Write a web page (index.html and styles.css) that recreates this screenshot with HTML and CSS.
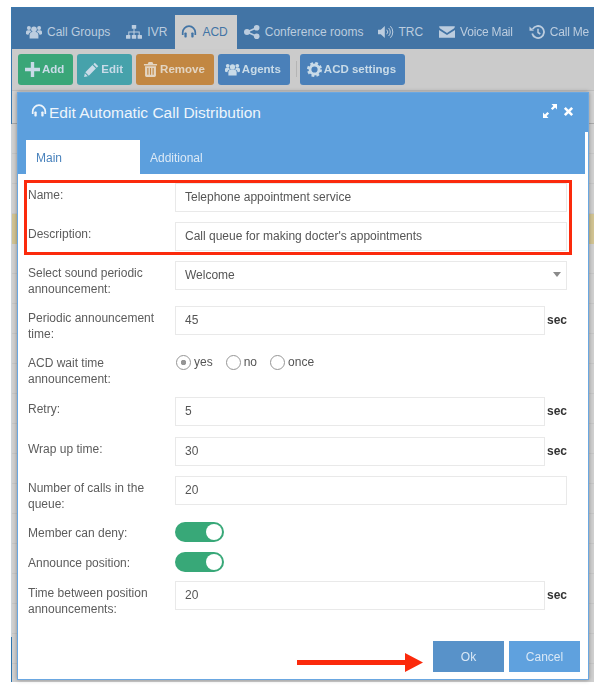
FILE: index.html
```html
<!DOCTYPE html>
<html lang="en">
<head>
<meta charset="utf-8">
<title>Edit Automatic Call Distribution</title>
<link rel="stylesheet" href="styles.css">
</head>
<body>
<svg class="defs" width="0" height="0" aria-hidden="true">
  <symbol id="i-users" viewBox="0 0 16 14"><circle cx="8" cy="4.2" r="2.8"/><circle cx="2.9" cy="3" r="2"/><circle cx="13.1" cy="3" r="2"/><path d="M3.6 13.5V10c0-2 1.4-3 2.6-3h3.6c1.2 0 2.6 1 2.6 3v3.5z"/><path d="M0 9V7c0-1 .8-1.800 1.800-1.800h2.400c.4.800.8 1.300 1.300 1.700C3.800 7.300 2.700 8 2.500 9.800 1.500 9.800.5 9.500 0 9zM16 9V7c0-1-.8-1.800-1.800-1.800h-2.400c-.4.800-.8 1.300-1.300 1.700 1.700.4 2.800 1.100 3 2.900 1 0 2-.3 2.500-.8z"/></symbol>
  <symbol id="i-sitemap" viewBox="0 0 16 14"><rect x="5.800" y="0" width="4.400" height="3.800" rx=".6"/><rect x="0" y="10" width="4.400" height="3.800" rx=".6"/><rect x="5.800" y="10" width="4.400" height="3.800" rx=".6"/><rect x="11.600" y="10" width="4.400" height="3.800" rx=".6"/><path d="M7.500 3.500h1v3h5.200v4h-1V7.500H8.500v3h-1v-3H3.300v3h-1v-4h5.200z"/></symbol>
  <symbol id="i-headphones" viewBox="0 0 16 14"><path d="M1.700 10V7.500a6.300 6.300 0 0 1 12.600 0V10" fill="none" stroke="currentColor" stroke-width="1.700"/><rect x="3.400" y="7.500" width="2.300" height="5" rx=".8"/><rect x="10.300" y="7.500" width="2.300" height="5" rx=".8"/></symbol>
  <symbol id="i-share" viewBox="0 0 16 14"><circle cx="3" cy="7" r="3"/><circle cx="12.700" cy="2.800" r="2.800"/><circle cx="12.700" cy="11.200" r="2.800"/><path d="M3 7l9.700-4.200M3 7l9.700 4.200" fill="none" stroke="currentColor" stroke-width="1.500"/></symbol>
  <symbol id="i-volume" viewBox="0 0 16 14"><path d="M0 4.700h2.800L6.800 1v12L2.800 9.300H0z"/><path d="M8.700 4.800a3 3 0 0 1 0 4.400M10.600 3a5.600 5.600 0 0 1 0 8M12.400 1.200a8.200 8.200 0 0 1 0 11.600" fill="none" stroke="currentColor" stroke-width="1"/></symbol>
  <symbol id="i-envelope" viewBox="0 0 16 14"><path d="M.2 1.200h15.600c.1 1.200-.4 2-1.300 2.600L8 8 1.500 3.800C.6 3.200.1 2.400.2 1.200z"/><path d="M0 5l8 5 8-5v7.800H0z"/></symbol>
  <symbol id="i-history" viewBox="0 0 16 14"><path d="M2.700 4.200a6 6 0 1 1-.5 4.300" transform="translate(1 0)" fill="none" stroke="currentColor" stroke-width="1.800"/><path d="M.5 1.500l4.500 4.200H.5z"/><path d="M9 3.800v3.700l2.300 1.500" fill="none" stroke="currentColor" stroke-width="1.500"/></symbol>
  <symbol id="i-plus" viewBox="0 0 16 16"><path d="M6.200 0h3.600v6.200H16v3.600H9.800V16H6.200V9.800H0V6.200h6.200z"/></symbol>
  <symbol id="i-pencil" viewBox="0 0 16 16"><path d="M11.500.8l3.700 3.700-1.600 1.600-3.700-3.700zM9 3.300L12.700 7l-7.600 7.600-3.700-3.700z"/><path d="M.9 11.900l3.200 3.200-4 .9z"/></symbol>
  <symbol id="i-trash" viewBox="0 0 14 16"><path d="M5 0h4l1 2h4v1.600H0V2h4z"/><path fill-rule="evenodd" d="M1.200 4.500h11.600V14.500c0 .8-.7 1.500-1.500 1.500H2.700c-.8 0-1.500-.7-1.500-1.500zM3.600 6.500v7h1.200v-7zm2.800 0v7h1.200v-7zm2.800 0v7h1.200v-7z"/></symbol>
  <symbol id="i-cog" viewBox="0 0 16 16"><circle cx="8" cy="8" r="4.800" fill="none" stroke="currentColor" stroke-width="3"/><circle cx="8" cy="8" r="6.700" fill="none" stroke="currentColor" stroke-width="2.600" stroke-dasharray="2.900 2.360"/></symbol>
  <symbol id="i-expand" viewBox="0 0 14 14"><path d="M8.500 0H14v5.500l-1.900-1.900-2.500 2.500-1.700-1.700 2.500-2.500zM5.500 14H0V8.500l1.900 1.900 2.500-2.500 1.700 1.700-2.500 2.500z"/></symbol>
  <symbol id="i-times" viewBox="0 0 12 12"><path d="M1 3l2-2 3 3 3-3 2 2-3 3 3 3-2 2-3-3-3 3-2-2 3-3z"/></symbol>
</svg>

<div class="app">
  <nav class="tabs-main">
    <a class="nav-tab"><svg class="ico"><use href="#i-users"/></svg>Call Groups</a>
    <a class="nav-tab"><svg class="ico"><use href="#i-sitemap"/></svg>IVR</a>
    <a class="nav-tab nav-tab--active"><svg class="ico"><use href="#i-headphones"/></svg>ACD</a>
    <a class="nav-tab"><svg class="ico"><use href="#i-share"/></svg>Conference rooms</a>
    <a class="nav-tab nav-tab--trc"><svg class="ico"><use href="#i-volume"/></svg>TRC</a>
    <a class="nav-tab nav-tab--narrow"><svg class="ico"><use href="#i-envelope"/></svg>Voice Mail</a>
    <a class="nav-tab nav-tab--narrow"><svg class="ico"><use href="#i-history"/></svg>Call Me</a>
  </nav>
  <div class="toolbar">
    <button class="tool tool--green"><svg class="ico-t"><use href="#i-plus"/></svg>Add</button>
    <button class="tool tool--teal"><svg class="ico-t"><use href="#i-pencil"/></svg>Edit</button>
    <button class="tool tool--orange"><svg class="ico-t"><use href="#i-trash"/></svg>Remove</button>
    <button class="tool tool--blue"><svg class="ico-t"><use href="#i-users"/></svg>Agents</button>
    <span class="tool-sep"></span>
    <button class="tool tool--blue"><svg class="ico-t"><use href="#i-cog"/></svg>ACD settings</button>
  </div>
  <div class="backdrop">
    <div class="back-warn"></div>
  </div>
</div>

<section class="dialog">
  <header class="dlg-head">
    <h1 class="dlg-title"><svg class="ico-title"><use href="#i-headphones"/></svg>Edit Automatic Call Distribution</h1>
    <div class="dlg-actions">
      <svg class="ico-expand"><use href="#i-expand"/></svg>
      <svg class="ico-close"><use href="#i-times"/></svg>
    </div>
  </header>
  <div class="dlg-tabs">
    <a class="dlg-tab dlg-tab--active">Main</a>
    <a class="dlg-tab">Additional</a>
  </div>
  <div class="form">
    <div class="row"><div class="lbl">Name:</div><div class="field">Telephone appointment service</div></div>
    <div class="row"><div class="lbl">Description:</div><div class="field">Call queue for making docter's appointments</div></div>
    <div class="row row--tight"><div class="lbl">Select sound periodic announcement:</div><div class="field field--select">Welcome<span class="caret"></span></div></div>
    <div class="row row--tight"><div class="lbl">Periodic announcement time:</div><div class="field field--unit">45</div><b class="unit">sec</b></div>
    <div class="row"><div class="lbl">ACD wait time announcement:</div>
      <div class="radios">
        <span class="radio radio--on">yes</span><span class="radio">no</span><span class="radio">once</span>
      </div>
    </div>
    <div class="row row--loose"><div class="lbl">Retry:</div><div class="field field--unit">5</div><b class="unit">sec</b></div>
    <div class="row"><div class="lbl">Wrap up time:</div><div class="field field--unit">30</div><b class="unit">sec</b></div>
    <div class="row"><div class="lbl">Number of calls in the queue:</div><div class="field">20</div></div>
    <div class="row"><div class="lbl">Member can deny:</div><span class="toggle"></span></div>
    <div class="row row--tight"><div class="lbl">Announce position:</div><span class="toggle"></span></div>
    <div class="row"><div class="lbl">Time between position announcements:</div><div class="field field--unit">20</div><b class="unit">sec</b></div>
  </div>
  <footer class="dlg-foot">
    <button class="btn btn--ok">Ok</button>
    <button class="btn">Cancel</button>
  </footer>
</section>

<div class="mark-box"></div>
<svg class="mark-arrow" viewBox="0 0 126 19"><path d="M0 7h108V0l18 9.500-18 9.500v-7H0z"/></svg>
</body>
</html>
```

FILE: styles.css
```css
* { box-sizing: border-box; }
html, body { margin: 0; height: 100%; }
body {
  background: #fff;
  font-family: "Liberation Sans", Arial, sans-serif;
  font-size: 12px;
  color: #555;
  position: relative;
  height: 689px;
  overflow: hidden;
  padding: 7px 6px 7px 11px;
}
.defs { position: absolute; }
svg { fill: currentColor; flex: none; }

.app {
  height: 675px;
  display: flex;
  flex-direction: column;
  background: #d0d0d0;
  border-style: solid;
  border-width: 1px 0 0 1px;
  border-image: linear-gradient(to bottom, #3b78ad 117px, #ccd3d9 117px, #ccd3d9 629px, #2f75ad 629px) 1;
  filter: blur(.35px);
}
.tabs-main {
  height: 41px;
  background: #4274a5;
  display: flex;
  align-items: flex-end;
  padding-left: 8px;
  color: #bccddf;
}
.nav-tab {
  height: 34px;
  display: flex;
  align-items: center;
  gap: 5px;
  padding: 0 6px;
  margin-right: 4px;
  white-space: nowrap;
}
.nav-tab--active { background: #cdcdcd; color: #4274a5; margin: 0 1px 0 -2px; padding: 0 9px 0 6px; }
.nav-tab--trc { margin-left: -1px; gap: 4px; }
.nav-tab--narrow { letter-spacing: -.2px; }
.ico { width: 16px; height: 14px; }
.toolbar {
  height: 42px;
  background: #cbcbcb;
  display: flex;
  align-items: center;
  gap: 4px;
  padding: 0 0 1px 6px;
  flex: none;
  border-bottom: 1px solid #bdbdbd;
}
.tool {
  height: 31px;
  border: 0;
  border-radius: 3px;
  padding: 0 9px 0 7px;
  display: flex;
  align-items: center;
  gap: 2px;
  font: bold 11.500px "Liberation Sans", Arial, sans-serif;
  color: #c9dbe8;
}
.ico-t { width: 15px; height: 15px; }
.tool--green { background: #3aa678; }
.tool--teal { background: #46a2ab; }
.tool--orange { background: #c28742; color: #e3d5c2; }
.tool--blue { background: #4a80b9; }
.tool-sep { width: 1px; height: 16px; background: #b5b5b5; margin: 0 -1px 0 2px; }

.backdrop {
  flex: 1;
  min-height: 0;
  padding-top: 123px;
  background:
    linear-gradient(#a9a9a9, #a9a9a9) 0 32px / 100% 1px no-repeat,
    repeating-linear-gradient(to bottom, #d0d0d0 0 29px, #c6c6c6 29px 30px) 0 33px no-repeat;
}
.back-warn { height: 30px; background: #d2c493; }

.dialog {
  position: absolute;
  left: 17px;
  top: 92px;
  width: 572px;
  height: 588px;
  background: #fff;
  border: 1px solid #6aa7e1;
  box-shadow: 0 0 4px rgba(0, 0, 0, .35);
  display: flex;
  flex-direction: column;
  filter: blur(.35px);
}
.dlg-head {
  height: 39px;
  background: #5c9fdd;
  color: #fff;
  display: flex;
  align-items: center;
  justify-content: space-between;
  padding: 0 14px 0 13px;
}
.dlg-title { margin: 0; font-size: 15.500px; font-weight: normal; display: flex; align-items: center; gap: 2px; color: #eef5fb; }
.ico-title { width: 16px; height: 14px; margin-top: -4px; }
.dlg-actions { display: flex; align-items: center; gap: 6px; margin-top: -3px; }
.ico-expand { width: 14px; height: 14px; }
.ico-close { width: 11px; height: 11px; }
.dlg-tabs {
  height: 42px;
  margin-right: 3px;
  background: #5c9fdd;
  display: flex;
  align-items: flex-end;
  padding-left: 8px;
  flex: none;
  color: #fff;
}
.dlg-tab { height: 34px; padding: 11px 0 0 10px; color: #dbe9f6; }
.dlg-tab--active { width: 114px; background: #fff; color: #4a83bd; }

.form {
  display: flex;
  flex-direction: column;
  gap: 10px;
  padding: 9px 21px 0 10px;
}
.row { display: flex; align-items: flex-start; }
.row--tight { margin-bottom: -1px; }
.row--loose { margin-bottom: 1px; }
.lbl { width: 147px; flex: none; padding-top: 4px; padding-right: 8px; line-height: 16px; color: #5c5c5c; }
.row:has(.toggle) .lbl { padding-top: 3px; }
.field {
  flex: 1;
  height: 29px;
  border: 1px solid #e9e9e9;
  padding: 0 9px;
  line-height: 27px;
  color: #555;
  background: #fff;
  position: relative;
}
.field--unit { flex: none; width: 370px; }
.caret {
  position: absolute;
  right: 5px;
  top: 10px;
  border: 4px solid transparent;
  border-top: 5px solid #8a8a8a;
  border-bottom: 0;
  width: 0;
}
.unit { margin-left: 2px; line-height: 29px; color: #333; font-size: 12px; }
.radios { display: flex; gap: 13px; padding: 3px 0 0 1px; }
.radio { display: flex; align-items: center; gap: 3px; line-height: 16px; }
.radio::before {
  content: "";
  width: 13px;
  height: 13px;
  border: 1.500px solid #959595;
  border-radius: 50%;
  background: #fff;
}
.radio--on::before { background: radial-gradient(circle, #959595 0 2.500px, #fff 3px); }
.toggle {
  width: 49px;
  height: 20px;
  border-radius: 10px;
  background: #38a878;
  position: relative;
}
.toggle::after {
  content: "";
  position: absolute;
  right: 2px;
  top: 2px;
  width: 16px;
  height: 16px;
  background: #fff;
  border-radius: 50%;
}
.dlg-foot {
  margin-top: auto;
  display: flex;
  justify-content: flex-end;
  gap: 5px;
  padding: 0 8px 7px 0;
}
.btn {
  width: 71px;
  height: 31px;
  border: 0;
  background: #5fa1de;
  color: #d9e8f6;
  font: 12px "Liberation Sans", Arial, sans-serif;
}
.btn--ok { background: #5892c9; }

.mark-box {
  position: absolute;
  left: 24px;
  top: 180px;
  width: 548px;
  height: 75px;
  border: 3px solid #fb2a0c;
  filter: blur(.3px);
}
.mark-arrow {
  position: absolute;
  left: 297px;
  top: 653px;
  width: 126px;
  height: 19px;
  fill: #fb2a0c;
}
```
